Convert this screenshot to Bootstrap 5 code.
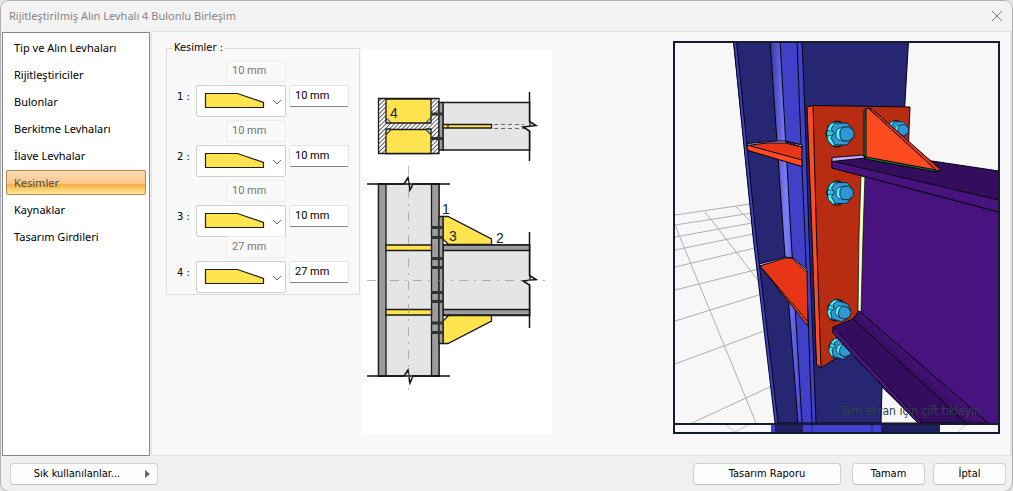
<!DOCTYPE html>
<html lang="tr">
<head>
<meta charset="utf-8">
<meta name="viewport" content="width=device-width, initial-scale=1">
<title>Rijitleştirilmiş Alın Levhalı 4 Bulonlu Birleşim</title>
<link href="https://cdn.jsdelivr.net/npm/bootstrap@5.3.0/dist/css/bootstrap.min.css" rel="stylesheet">
<style>
  body { font-family: "DejaVu Sans Condensed", "DejaVu Sans", sans-serif; font-size: 11px; line-height: 16px; color: #000; background: #e4e4e4; }
  .dialog { background: #f0f0f0; border: 1px solid #b0b0b0; border-radius: 9px; overflow: hidden; }
  .titlebar { height: 30px; background: #f3f3f3; padding: 0 8px; }
  .titlebar h1 { font-family: "Noto Sans", sans-serif; font-size: 11px; line-height: 16px; font-weight: 400; color: #858585; }
  .close-btn { width: 14px; height: 14px; }
  .side { width: 148px; margin: 1px 1px 0; border: 1px solid #828790; background: #fff; padding: 2px 3px; font-family: "Noto Sans", sans-serif; }
  .side .nav-link { color: #000; font-size: 11px; line-height: 15px; padding: 4px 7px; margin-bottom: 2px; border: 1px solid transparent; border-radius: 2px; }
  .side .nav-link.active { color: #4c4c4c; border-color: #b08c50; background: linear-gradient(#f8d8b0 0, #fbcb8e 54%, #f7a93e 56%, #fbd070 80%, #fde69a 100%); }
  .sheet { background: #f9f9f9; border: 1px solid #e3e3e3; border-right-width: 2px; padding: 9px 10px 21px 14px; }
  .cuts { width: 194px; }
  .cuts fieldset { border: 1px solid #dcdcdc; padding: 0 10px 1px 10px; }
  .cuts legend { float: none; width: auto; font-size: 11px; line-height: 14px; margin: -7px 0 5px -4px; padding: 0 1px; background: #f9f9f9; }
  .cut { display: grid; grid-template-columns: 19px 30px 60px 60px; row-gap: 3px; margin-bottom: 3px; }
  .cut:last-child { margin: -4px 0 0; }
  .cut .form-control { font-family: Roboto, sans-serif; font-size: 11px; line-height: 14px; height: 22px; padding: 0 5px 1px; border-radius: 2px; border: 1px solid #e5e5e5; color: #000; background: #fff; min-height: 0; }
  .cut .form-control.value { border-bottom-color: #868686; margin-left: 3px; width: 60px; }
  .cut .form-control:disabled { grid-column: 3; background: #f9f9f9; color: #757575; border-color: #ececec; }
  .cut label { grid-column: 1; padding-top: 4px; }
  .pick { grid-column: 2 / 4; height: 32px; }
  .pick .form-select { height: 32px; min-height: 0; border: 1px solid #cfcfcf; border-radius: 2px; background: #fff; padding: 0; }
  .pick svg { left: 0; top: 0; pointer-events: none; }
  .drawing { width: 190px; background: #fff; margin: 9px 0 0 2px; }
  .preview { width: 327px; }
  .foot { padding: 7px 6px 6px 9px; }
  .foot .btn { font-size: 11px; line-height: 14px; padding: 3px 6px; height: 22px; border: 1px solid #cfcfcf; border-bottom-color: #bdbdbd; border-radius: 4px; background: #fdfdfd; color: #000; }
  .wide { width: 148px; }
  .slim { width: 73px; }
  .report { margin-right: 11px; }
</style>
</head>
<body>
<div class="dialog d-flex flex-column min-vh-100">
  <header class="titlebar d-flex align-items-center justify-content-between">
    <h1 class="m-0">Rijitleştirilmiş Alın Levhalı 4 Bulonlu Birleşim</h1>
    <button type="button" class="close-btn btn p-0 border-0 d-flex" aria-label="Kapat">
      <svg width="14" height="14" viewBox="0 0 14 14"><path d="M2 2l10 10M12 2L2 12" stroke="#777" fill="none"/></svg>
    </button>
  </header>

  <main class="d-flex flex-grow-1">
    <nav class="side nav flex-column flex-nowrap flex-shrink-0">
      <a class="nav-link" href="#tip">Tip ve Alın Levhaları</a>
      <a class="nav-link" href="#rijit">Rijitleştiriciler</a>
      <a class="nav-link" href="#bulon">Bulonlar</a>
      <a class="nav-link" href="#berkitme">Berkitme Levhaları</a>
      <a class="nav-link" href="#ilave">İlave Levhalar</a>
      <a class="nav-link active" aria-current="page" href="#kesim">Kesimler</a>
      <a class="nav-link" href="#kaynak">Kaynaklar</a>
      <a class="nav-link" href="#girdi">Tasarım Girdileri</a>
    </nav>

    <section class="sheet d-flex align-items-start flex-grow-1">
      <form class="cuts flex-shrink-0">
        <fieldset>
          <legend>Kesimler :</legend>
          <div class="cut">
            <input class="form-control" value="10 mm" disabled aria-label="Kesim 1 ölçüsü">
            <label for="c1">1 :</label>
            <div class="pick position-relative"><select class="form-select" aria-label="Kesim 1 biçimi"><option></option></select>
              <svg class="position-absolute" width="90" height="32"><use href="#cutshape"/></svg></div>
            <input class="form-control value" id="c1" value="10 mm">
          </div>
          <div class="cut">
            <input class="form-control" value="10 mm" disabled aria-label="Kesim 2 ölçüsü">
            <label for="c2">2 :</label>
            <div class="pick position-relative"><select class="form-select" aria-label="Kesim 2 biçimi"><option></option></select>
              <svg class="position-absolute" width="90" height="32"><use href="#cutshape"/></svg></div>
            <input class="form-control value" id="c2" value="10 mm">
          </div>
          <div class="cut">
            <input class="form-control" value="10 mm" disabled aria-label="Kesim 3 ölçüsü">
            <label for="c3">3 :</label>
            <div class="pick position-relative"><select class="form-select" aria-label="Kesim 3 biçimi"><option></option></select>
              <svg class="position-absolute" width="90" height="32"><use href="#cutshape"/></svg></div>
            <input class="form-control value" id="c3" value="10 mm">
          </div>
          <div class="cut position-relative">
            <input class="form-control" value="27 mm" disabled aria-label="Kesim 4 ölçüsü">
            <label for="c4">4 :</label>
            <div class="pick position-relative"><select class="form-select" aria-label="Kesim 4 biçimi"><option></option></select>
              <svg class="position-absolute" width="90" height="32"><use href="#cutshape"/></svg></div>
            <input class="form-control value" id="c4" value="27 mm">
          </div>
        </fieldset>
      </form>

      <svg class="drawing flex-shrink-0" viewBox="362 50 190 384" height="384" font-family="Liberation Sans, sans-serif" font-size="14">
        <defs>
          <pattern id="hatch" width="3" height="3" patternUnits="userSpaceOnUse" patternTransform="rotate(45)">
            <rect width="3" height="3" fill="#fff"/><path d="M.5 0v3" stroke="#333" stroke-width=".8"/>
          </pattern>
          <g id="cutshape">
            <path d="M9.500 8.500h32l26 9v5h-58z" fill="#ffe34f" stroke="#1e1e14" stroke-width="1.200"/>
            <path d="M77 15l4 4 4-4" fill="none" stroke="#666"/>
          </g>
        </defs>
        <!-- plan -->
        <g stroke="#1a1a1a" stroke-width="1.300">
          <path d="M443 102.500h87v47.500h-87z" fill="#e5e5e5"/>
          <path d="M378.500 98.500h60.500v55h-60.500z" fill="url(#hatch)"/>
          <path d="M386 99h45v19l-5 5h-35l-5-5zM386 153.500v-19l5-5h35l5 5v19z" fill="#ffe34f"/>
          <path d="M386 118v5h5M431 118v5h-5M386 134v-5h5M431 134v-5h-5" fill="#ccc"/>
          <path d="M439 102.500h4v47.500h-4z" fill="#9c9c9c"/>
          <path d="M443 124.500h48.500v3.500h-48.500zM448 124.500v3.500" fill="#ffe34f"/>
          <path d="M431 114h13M431 138.500h13" stroke="#333" stroke-width="3"/>
          <path d="M494 124.500h30M494 128.500h30" stroke-width=".6" stroke-dasharray="4 3"/>
        </g>
        <path d="M530.500 102v19l6 4-14 2 8 4v19h5v-49z" fill="#fff"/>
        <path d="M529.500 92v29.500l6.500 4-13 1.500 6.500 4v30" fill="none" stroke="#111" stroke-width="1.500"/>
        <!-- elevation -->
        <g stroke="#1a1a1a" stroke-width="1.300">
          <path d="M378.500 184h60.500v192h-60.500z" fill="#e5e5e5"/>
          <path d="M378.500 184h7.500v192h-7.500zM431.500 184h7.500v192h-7.500z" fill="#9c9c9c"/>
          <path d="M443 245h87v70.500h-87z" fill="#e5e5e5"/>
          <path d="M443 245h87v5.500h-87zM443 309.500h87v5.500h-87z" fill="#9c9c9c"/>
          <path d="M386 245h45.500v5.500h-45.500zM386 309.500h45.500v5.500h-45.500z" fill="#ffe34f"/>
          <path d="M443 216.500h5l43.500 22.500v5.500h-43l-5.500-5.500zM443 343.500h5l43.500-22.500v-5.500h-43l-5.500 5.500z" fill="#ffe34f"/>
          <path d="M439 216.500h4v127h-4z" fill="#9c9c9c"/>
          <path d="M431 227.500h13M431 237.500h13M431 258.500h13M431 267.500h13M431 292.500h13M431 301.500h13M431 323h13M431 332.500h13" stroke="#333" stroke-width="3"/>
        </g>
        <path d="M530.500 240v36l6 3.500-14 1 8 4v36h5v-80z" fill="#fff"/>
        <path d="M529.500 232v43.500l6.500 4-13 1.500 6.500 4v43" fill="none" stroke="#111" stroke-width="1.500"/>
        <path d="M367 184h37l4-6.500 2 12.500 3-6h37M367 376h37l4-6 2 13 3-7h37" fill="none" stroke="#111" stroke-width="1.500"/>
        <path d="M367 280.500h180M408.500 166v228" stroke="#888" stroke-width=".6" stroke-dasharray="9 6 2 6" fill="none"/>
        <g fill="#222"><text x="390" y="118">4</text><text x="442" y="214">1</text><text x="449" y="241">3</text><text x="496" y="243">2</text></g>
      </svg>

      <svg class="preview flex-shrink-0 ms-auto" viewBox="673 41 327 393" height="393" role="img" aria-label="Birleşimin üç boyutlu görünümü">
        <defs>
          <linearGradient id="web"><stop offset="0" stop-color="#3434a8"/><stop offset=".5" stop-color="#7e7ef6"/><stop offset="1" stop-color="#4242cc"/></linearGradient>
          <linearGradient id="fillet" gradientUnits="userSpaceOnUse" x1="905" y1="370" x2="918" y2="356"><stop offset="0" stop-color="#350d5e"/><stop offset="1" stop-color="#48127f"/></linearGradient>
          <g id="bolt" stroke="#061820" stroke-linejoin="round">
            <path d="M-5-12.500l-6 4-3 8 3 8 5 5h6v-25z" fill="#35c8e8" stroke-width="1.500"/>
            <path d="M-5-12l3 4-4 6-7-2 3-6zM-13 2l6-1 4 7-4 4-5-5z" fill="#44f4ff" stroke-width=".6"/>
            <path d="M-5-11h12l5 5v11l-5 6h-12l-4-7 3-5-3-4z" fill="#2f97d4" stroke-width=".9"/>
            <path d="M-1-6h5v12h-5l-3-3v-6z" fill="#44f4ff" stroke-width=".7"/>
            <path d="M3-7h6l5 4v6l-5 4h-6l-3-4v-6z" fill="#2f97d4" stroke-width=".9"/>
          </g>
        </defs>
        <path d="M673 41h327v393h-327z" fill="#f7f7f7"/>
        <g stroke="#aeaeaa" fill="none">
          <path d="M675 215l75-11M675 225l77-12M675 237l77-14M675 250l78-16M675 267l80-19M675 290l84-21M675 321l87-27M675 364l92-34M692 423l82-38"/>
          <path d="M675 224l2 6 79 193M705 212l15 19 40 52M735 206l17 17M881 411l16-8"/>
        </g>
        <!-- column -->
        <g stroke="#050510" stroke-width="1">
          <path d="M733.500 41h175l-4 70-22 276-1 36h-105l-23-187z" fill="#262672"/>
          <path d="M733.500 41h3l19.500 195 22 187h-3l-22-187z" fill="#4040c8"/>
          <path d="M779 41h23l3 75 4 120 7 187h-18l-9-187z" fill="#4040c8"/>
          <path d="M770 41h10l11 195 11 187h-4l-14.500-187z" fill="url(#web)"/>
          <path d="M797 41l5 129 3 66 7 187" fill="none"/>
          <path d="M747 143.500l30-2.500h9l16 4v3l-54 0z" fill="#c6a6f8"/>
          <path d="M785 141.500l17 3.500v2z" fill="#fff"/>
          <path d="M747 145.500l20-2.500 18 0 17 4v19l-54-16z" fill="#e63617"/>
          <path d="M747 145l55 15v6.500l-54-16z" fill="#ff4b20"/>
          <path d="M759 264l26-7 7 1-30 9z" fill="#c6a6f8"/>
          <path d="M792 257l15 13v3l-17-13z" fill="#fff"/>
          <path d="M760 266l25-8h7l15 14 1 53z" fill="#e63617"/>
          <path d="M760 266l48 56v4z" fill="#ff4b20"/>
        </g>
        <!-- end plate and beam -->
        <g stroke="#050510" stroke-width="1" stroke-linejoin="round">
          <path d="M807 107l6-1.500 97 1.500-2.500 60-44 10-5 134-4 36-34 21-4-4-4-128z" fill="#b82c12"/>
          <path d="M807 107l6-1.500 3.500 130.500 4.500 132-4.500-4-4.500-128z" fill="#ff4b20"/>
          <use href="#bolt" transform="translate(898 130) scale(.75)"/>
          <use href="#bolt" x="840" y="134"/>
          <use href="#bolt" transform="translate(840 193) scale(.95)"/>
          <use href="#bolt" transform="translate(839 311) rotate(18) scale(.86)"/>
          <use href="#bolt" transform="translate(840 349) rotate(18) scale(.82)"/>
          <path d="M864 176l135 36v212h-11l-128-112 3-90z" fill="#48127f"/>
          <path d="M861 174h4l-2 62-2 76-3-1 1-75z" fill="#ecffc8" stroke-width=".7"/>
          <path d="M832 161l33-4 67 4 67 10v41l-167-44z" fill="#350d5e"/>
          <path d="M832 161l167 39v12l-167-44z" fill="#48127f"/>
          <path d="M832 157.500l31-2.500 2 3-33 3.500z" fill="#c6a6f8"/>
          <path d="M882 387l-1 36h38z" fill="#f7f7f7"/>
          <path d="M833 327l20-8 6-8 129 112h-70l-66-69-19-21z" fill="#350d5e"/>
          <path d="M853 319l6-8 129 112h-22z" fill="url(#fillet)"/>
          <path d="M833 327l89 96h-4l-66-69-19-21z" fill="#48127f"/>
          <path d="M864 110l2-2 2 50-4-2z" fill="#14963c"/>
          <path d="M866 156l71 12v4l-72-13z" fill="#148030"/>
          <path d="M868 108l4 1 69 61-5 1z" fill="#e63617"/>
          <path d="M866 110l2-2 68 62-70-13z" fill="#ff4b20"/>
        </g>
        <!-- lower band of the view -->
        <path d="M673 424h327v9h-327z" fill="#f7f7f7"/>
        <path d="M725 424l10 8 15-8M958 432l8-8" stroke="#c4c4c0" fill="none"/>
        <path d="M771 424h110v9h-110z" fill="#4242d0"/><path d="M775 424h28v9h-28zM881 424h59v9h-59z" fill="#1e1e62"/>
        <path d="M812 424v9M872 424v9" stroke="#22227a"/>
        <path d="M674 424h325M674 42h325v391h-325z" fill="none" stroke="#171b30" stroke-width="2"/>
        <text x="840" y="415" font-family="DejaVu Sans Condensed, sans-serif" font-size="12" fill="#2a4448">Tam ekran için çift tıklayın.</text>
      </svg>
    </section>
  </main>

  <footer class="foot d-flex align-items-center">
    <button type="button" class="btn wide d-flex align-items-center">
      <span class="flex-grow-1 pe-2">Sık kullanılanlar...</span>
      <svg width="6" height="8" viewBox="0 0 6 8"><path d="M0 0l5 4-5 4z" fill="#666"/></svg>
    </button>
    <button type="button" class="btn wide ms-auto report">Tasarım Raporu</button>
    <button type="button" class="btn slim me-2">Tamam</button>
    <button type="button" class="btn slim">İptal</button>
  </footer>
</div>
<script src="https://cdn.jsdelivr.net/npm/bootstrap@5.3.0/dist/js/bootstrap.bundle.min.js"></script>
</body>
</html>
